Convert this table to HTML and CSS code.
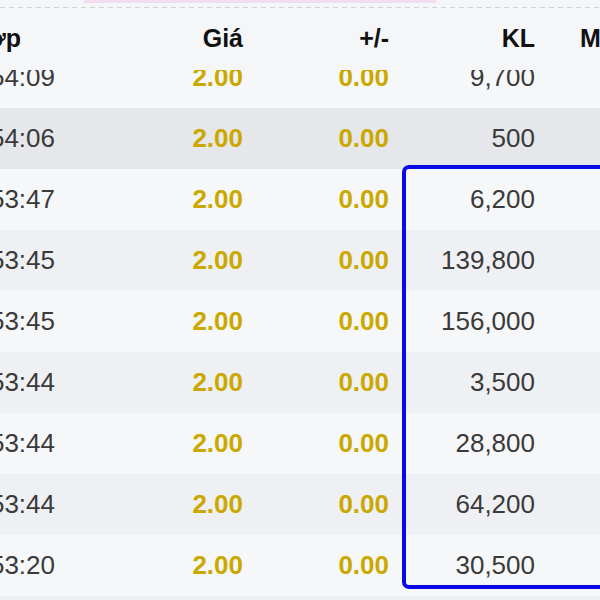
FILE: index.html
```html
<!DOCTYPE html>
<html lang="vi">
<head>
<meta charset="utf-8">
<title>Khớp lệnh</title>
<link rel="stylesheet" href="styles.css">
</head>
<body>
<div class="page">
  <div class="top">
    <div class="pink"></div>
    <div class="dash"></div>
  </div>
  <div class="table">
    <div class="row head">
      <div class="c time">Thời gian khớp</div>
      <div class="c num">Giá</div>
      <div class="c num">+/-</div>
      <div class="c num">KL</div>
      <div class="c side">M/B</div>
    </div>
    <div class="body">
      <div class="row odd"><div class="c time">10:54:09</div><div class="c num price">2.00</div><div class="c num price">0.00</div><div class="c num">9,700</div><div class="c side"></div></div>
      <div class="row hover"><div class="c time">10:54:06</div><div class="c num price">2.00</div><div class="c num price">0.00</div><div class="c num">500</div><div class="c side"></div></div>
      <div class="row odd"><div class="c time">10:53:47</div><div class="c num price">2.00</div><div class="c num price">0.00</div><div class="c num">6,200</div><div class="c side"></div></div>
      <div class="row even"><div class="c time">10:53:45</div><div class="c num price">2.00</div><div class="c num price">0.00</div><div class="c num">139,800</div><div class="c side"></div></div>
      <div class="row odd"><div class="c time">10:53:45</div><div class="c num price">2.00</div><div class="c num price">0.00</div><div class="c num">156,000</div><div class="c side"></div></div>
      <div class="row even"><div class="c time">10:53:44</div><div class="c num price">2.00</div><div class="c num price">0.00</div><div class="c num">3,500</div><div class="c side"></div></div>
      <div class="row odd"><div class="c time">10:53:44</div><div class="c num price">2.00</div><div class="c num price">0.00</div><div class="c num">28,800</div><div class="c side"></div></div>
      <div class="row even"><div class="c time">10:53:44</div><div class="c num price">2.00</div><div class="c num price">0.00</div><div class="c num">64,200</div><div class="c side"></div></div>
      <div class="row odd"><div class="c time">10:53:20</div><div class="c num price">2.00</div><div class="c num price">0.00</div><div class="c num">30,500</div><div class="c side"></div></div>
      <div class="row even"><div class="c time">10:53:18</div><div class="c num price">2.00</div><div class="c num price">0.00</div><div class="c num">1,000</div><div class="c side"></div></div>
    </div>
    <div class="highlight"></div>
  </div>
</div>
</body>
</html>
```

FILE: styles.css
```css
html, body {
  margin: 0;
  padding: 0;
  background: #f5f6f8;
  overflow: hidden;
}
.page {
  width: 600px;
  height: 600px;
  overflow: hidden;
  position: relative;
  font-family: "Liberation Sans", Arial, sans-serif;
  font-size: 26px;
  color: #3a3a3a;
}
.top {
  height: 10px;
  display: flex;
  flex-direction: column;
}
.pink {
  margin-left: 84px;
  width: 352px;
  height: 3px;
  background: #f1def0;
}
.dash {
  margin-top: 4px;
  height: 1px;
  background-image: linear-gradient(to right, #cfd3d8 0 5px, transparent 5px 9px);
  background-size: 9px 1px;
}
.table {
  position: relative;
}
.row {
  display: flex;
  align-items: center;
  height: 61px;
  margin-left: -60px;
}
.head {
  height: 60px;
  padding-bottom: 4px;
  box-sizing: border-box;
  background: #f5f6f8;
  position: relative;
  z-index: 2;
  font-weight: bold;
  font-size: 25px;
  color: #111;
}
.body {
  margin-top: -23px;
}
.c {
  flex: none;
  white-space: nowrap;
  overflow: hidden;
}
.time {
  width: 169px;
  padding-right: 54px;
  box-sizing: border-box;
  display: flex;
  justify-content: flex-end;
}
.head .time {
  padding-right: 88px;
}
.num {
  width: 146px;
  padding-right: 12px;
  box-sizing: border-box;
  text-align: right;
}
.side {
  width: 120px;
  padding-left: 33px;
  box-sizing: border-box;
}
.price {
  color: #cba800;
  font-weight: bold;
}
.odd { background: #f6f7f9; }
.even { background: #eef0f3; }
.hover { background: #e5e7ea; }
.highlight {
  position: absolute;
  left: 402px;
  top: 155px;
  width: 240px;
  height: 424px;
  box-sizing: border-box;
  border: 4px solid #0a0ae8;
  border-radius: 7px;
  z-index: 3;
}
```
